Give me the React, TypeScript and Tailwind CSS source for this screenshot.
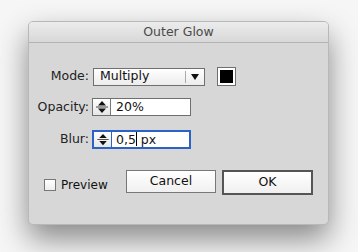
import React from "react";

const font = { fontFamily: '"DejaVu Sans", "Liberation Sans", sans-serif' };

const Stepper: React.FC<{ focused?: boolean }> = ({ focused }) => (
  <div
    className={`w-[18px] h-full flex flex-col items-center justify-center border-r ${
      focused ? "border-[#2a62c8]" : "border-[#777]"
    } bg-gradient-to-b from-white to-[#e6e6e6]`}
  >
    <svg width="12" height="16" viewBox="0 0 12 16">
      <path d="M2 6.5 L6 2 L10 6.5 Z" fill="#111" />
      <line x1="0" y1="8" x2="12" y2="8" stroke="#444" strokeWidth="1" />
      <path d="M2 9.5 L6 14 L10 9.5 Z" fill="#111" />
    </svg>
  </div>
);

const Row: React.FC<{ label: string; children: React.ReactNode }> = ({ label, children }) => (
  <div className="flex items-center">
    <div className="w-[63px] text-right pr-[3px] text-[12.5px] text-[#222]">{label}</div>
    {children}
  </div>
);

export default function App() {
  return (
    <div className="w-[358px] h-[252px] bg-[#f6f6f6] pt-[21px] pl-[28px]" style={font}>
      <div className="w-[301px] h-[204px] rounded-[5px] bg-[#d7d7d7] border border-[#b8b8b8] shadow-[0_14px_30px_rgba(0,0,0,0.45)] flex flex-col overflow-hidden">
        <div className="h-[21px] flex items-center justify-center bg-gradient-to-b from-[#ececec] to-[#d8d8d8] border-b border-[#b2b2b2] text-[12.5px] text-[#4a4a4a]">
          Outer Glow
        </div>

        <div className="flex flex-col pt-[24px]">
          <Row label="Mode:">
            <div className="w-[112px] h-[18px] ml-[1px] flex items-center border border-[#6f6f6f] bg-gradient-to-b from-white to-[#ececec]">
              <span className="flex-1 pl-[6px] text-[12.5px] text-[#111]">Multiply</span>
              <div className="w-[1px] h-[12px] bg-[#aaa]" />
              <div className="w-[18px] flex justify-center">
                <svg width="8" height="6" viewBox="0 0 8 6">
                  <path d="M0 0 H8 L4 6 Z" fill="#111" />
                </svg>
              </div>
            </div>
            <div className="ml-[12px] w-[19px] h-[19px] border border-[#6f6f6f] bg-white p-[2px]">
              <div className="w-full h-full bg-black" />
            </div>
          </Row>

          <div className="mt-[12px]">
            <Row label="Opacity:">
              <div className="w-[99px] h-[18px] flex border border-[#6f6f6f] bg-white">
                <Stepper />
                <span className="pl-[5px] text-[12.5px] text-[#111] leading-[16px]">20%</span>
              </div>
            </Row>
          </div>

          <div className="mt-[13px]">
            <Row label="Blur:">
              <div className="w-[99px] h-[19px] flex border-2 border-[#2a62c8] bg-white">
                <Stepper focused />
                <span className="pl-[4px] text-[12.5px] text-[#111] leading-[15px] flex items-center whitespace-pre">
                  0,5<span className="inline-block w-[1px] h-[14px] bg-black" />{" px"}
                </span>
              </div>
            </Row>
          </div>

          <div className="flex items-start mt-[21px]">
            <label className="w-[97px] flex items-center pl-[15px] pt-[6px] gap-[5px] text-[12px] text-[#111]">
              <span className="w-[12px] h-[12px] border border-[#777] bg-gradient-to-b from-white to-[#eee]" />
              Preview
            </label>
            <button className="w-[90px] h-[23px] border border-[#777] bg-gradient-to-b from-white to-[#f0f0f0] text-[12.5px] text-[#111]">
              Cancel
            </button>
            <button className="ml-[6px] w-[91px] h-[25px] border-2 border-[#555] bg-gradient-to-b from-white to-[#f0f0f0] text-[12.5px] text-[#111]">
              OK
            </button>
          </div>
        </div>
      </div>
    </div>
  );
}
